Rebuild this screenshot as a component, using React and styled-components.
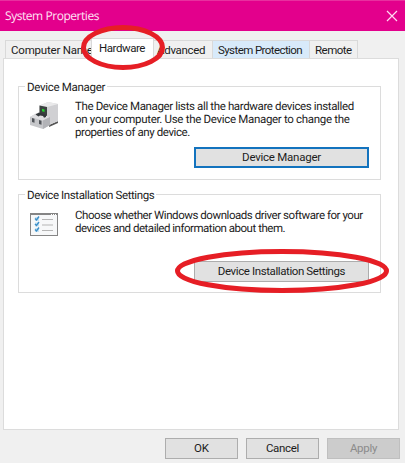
import React, { useState } from 'react';
import styled, { createGlobalStyle } from 'styled-components';

const GlobalStyle = createGlobalStyle`
body {
  margin: 0;
  background: #f0f0f0;
}
* {
  box-sizing: border-box;
}
`;

const Window = styled.div`
position: relative;
display: flex;
flex-direction: column;
width: 405px;
height: 463px;
overflow: hidden;
background: #f0f0f0;
color: #1c1c1c;
font-family: Roboto, 'Liberation Sans', sans-serif;
font-size: 11.5px;
line-height: 13px;
white-space: nowrap;
text-rendering: geometricPrecision;
`;

const TitleBar = styled.header`
display: flex;
align-items: center;
justify-content: space-between;
height: 31px;
flex: 0 0 auto;
padding: 0 7px 1px 5px;
border-top: 1px solid #e8309f;
background: #e3008c;
color: #ffe3f5;
font-family: 'Open Sans', 'Noto Sans', sans-serif;
font-size: 12px;
`;

const Title = styled.span`
letter-spacing: -0.45px;
`;

const Tabs = styled.nav`
display: flex;
align-items: flex-end;
height: 27px;
padding-left: 5px;
flex: 0 0 auto;
`;

const Tab = styled.button`
position: relative;
z-index: ${p => (p.$active ? 1 : 0)};
width: ${p => p.$width}px;
height: ${p => (p.$active ? 21 : 18)}px;
margin: 0 0 ${p => (p.$active ? -1 : 0)}px ${p => (p.$first ? 0 : -1)}px;
padding: ${p => (p.$active ? '0 0 1px' : '2px 0 0')} ${p => p.$indent}px;
text-align: left;
border: 1px solid #d9d9d9;
border-bottom: 0;
background: ${p => (p.$active ? '#fff' : p.$hot ? '#d8eafa' : '#f0f0f0')};
color: inherit;
font: inherit;
letter-spacing: ${p => p.$spacing}px;
`;

const Panel = styled.main`
width: 396px;
height: 372px;
flex: 0 0 auto;
margin-left: 3px;
padding: 27px 17px 0 14px;
border: 1px solid #dcdcdc;
background: #fff;
`;

const Group = styled.section`
display: flex;
flex-direction: column;
width: 363px;
height: ${p => p.$height}px;
margin-bottom: 14px;
border: 1px solid #dcdcdc;
`;

const Legend = styled.h2`
align-self: flex-start;
margin: -6px 0 0 6px;
padding: 0 2px;
background: #fff;
font: inherit;
letter-spacing: ${p => p.$spacing}px;
`;

const GroupBody = styled.div`
display: flex;
height: ${p => p.$height}px;
padding: ${p => p.$top}px 0 0 11px;
`;

const IconBox = styled.div`
width: 45px;
flex: 0 0 auto;
padding-top: ${p => p.$top || 0}px;

svg {
  display: block;
}
`;

const Description = styled.p`
margin: 0;
`;

const Line = styled.span`
display: block;
letter-spacing: ${p => p.$spacing}px;
`;

const Button = styled.button`
width: ${p => p.$width}px;
height: 21px;
flex: 0 0 auto;
padding: 0;
border: ${p => (p.$focused ? '2px solid #1373be' : '1px solid #adadad')};
background: #e1e1e1;
color: inherit;
font: inherit;
letter-spacing: ${p => p.$spacing || 0}px;

&:disabled {
  border-color: #bfbfbf;
  background: #ccc;
  color: #8b8b8b;
}
`;

const GroupButton = styled(Button)`
align-self: flex-end;
margin-right: 11px;
`;

const Footer = styled.footer`
display: flex;
justify-content: flex-end;
gap: 8px;
padding: 8px 5px 0 0;
`;

const Marks = styled.svg`
position: absolute;
top: 0;
left: 0;
z-index: 2;
pointer-events: none;
`;

const tabs = [
  { name: 'Computer Name', width: 87, indent: 5, spacing: -0.2 },
  { name: 'Hardware', width: 63, indent: 7, spacing: -0.45 },
  { name: 'Advanced', width: 60, indent: 3, spacing: -0.3 },
  { name: 'System Protection', width: 98, indent: 5, spacing: -0.58, hot: true },
  { name: 'Remote', width: 49, indent: 5, spacing: -0.5 },
];

function CloseIcon() {
  return (
    <svg width="12" height="12" viewBox="0 0 12 12" stroke="#ffd9f1" strokeWidth="1.2">
      <path d="M1 1l10 10M11 1L1 11" />
    </svg>
  );
}

function DeviceIcon() {
  return (
    <svg width="30" height="30" viewBox="0 0 30 30">
      <path d="M19 24l9-4v2l-9 4z" fill="#555" />
      <path d="M9.500 4.500L18 1l10 2v17l-9 4-9.500-3z" fill="#d6d6d8" />
      <path d="M17 6l11-3v17l-11 4z" fill="#d0d0d3" />
      <path d="M9.500 4.500L18 1l10 2-11 3z" fill="#e9e9ea" />
      <path d="M9.500 4.500L17 6v10l-7.500-2z" fill="#3c4140" />
      <path d="M12 7.800l2.500.6v2.500l-2.500-.6z" fill="#20d52b" />
      <path d="M0 16l7-4 13 4v8l-7 4-13-4z" fill="#c6c7ca" />
      <path d="M0 16l7-4 13 4-7 3.500z" fill="#dedee1" />
      <path d="M13 19.500l7-3.500v8l-7 4z" fill="#b2b3b7" />
      <path d="M5.500 13.500L9 11.500l7 2v2.500l-2 .8-1-1.800-3-.6-1.500 1.200z" fill="#34383b" />
      <path d="M2 17l2.500.8v4L2 21zM9 19l2.500.8v4L9 23z" fill="#505459" />
    </svg>
  );
}

function ChecklistIcon() {
  return (
    <svg width="28" height="23" viewBox="0 0 28 23">
      <rect x=".5" y=".5" width="27" height="22" fill="#f7f8f9" stroke="#858585" />
      <path d="M0 1h28" stroke="#858585" strokeWidth="2" />
      <path d="M21 1.500h1M23 1.500h1M25 1.500h1" stroke="#fff" />
      <path d="M12 6.500h11M12 12h11M12 17.500h11" stroke="#b5b5b5" />
      <path d="M5 4h4v4H5zM5 9.500h4v4H5zM5 15h4v4H5z" fill="#c7e4f5" />
      <path d="M5 5.500l1.500 1.500L9 3.500M5 11l1.500 1.500L9 9M5 16.500l1.500 1.500L9 14.500" fill="none" stroke="#3d8fc8" strokeWidth="1.400" />
    </svg>
  );
}

function App() {
  const [active, setActive] = useState('Hardware');

  return (
    <>
      <GlobalStyle />
      <Window>
        <TitleBar>
          <Title>System Properties</Title>
          <CloseIcon />
        </TitleBar>

        <Tabs>
          {tabs.map((tab, i) => (
            <Tab
              key={tab.name}
              $first={i === 0}
              $active={tab.name === active}
              $hot={tab.hot}
              $width={tab.width}
              $indent={tab.indent}
              $spacing={tab.spacing}
              onClick={() => setActive(tab.name)}
            >
              {tab.name}
            </Tab>
          ))}
        </Tabs>

        <Panel>
          <Group $height={94}>
            <Legend $spacing={-0.3}>Device Manager</Legend>
            <GroupBody $height={53} $top={6}>
              <IconBox $top={1}><DeviceIcon /></IconBox>
              <Description>
                <Line $spacing={-0.37}>The Device Manager lists all the hardware devices installed</Line>
                <Line $spacing={-0.31}>on your computer. Use the Device Manager to change the</Line>
                <Line $spacing={-0.42}>properties of any device.</Line>
              </Description>
            </GroupBody>
            <GroupButton $width={175} $spacing={-0.25} $focused>Device Manager</GroupButton>
          </Group>

          <Group $height={99}>
            <Legend $spacing={-0.4}>Device Installation Settings</Legend>
            <GroupBody $height={59} $top={7}>
              <IconBox $top={4}><ChecklistIcon /></IconBox>
              <Description>
                <Line $spacing={-0.45}>Choose whether Windows downloads driver software for your</Line>
                <Line $spacing={-0.48}>devices and detailed information about them.</Line>
              </Description>
            </GroupBody>
            <GroupButton $width={175} $spacing={-0.4}>Device Installation Settings</GroupButton>
          </Group>
        </Panel>

        <Footer>
          <Button $width={73}>OK</Button>
          <Button $width={73} $spacing={-0.3}>Cancel</Button>
          <Button $width={73} $spacing={-0.3} disabled>Apply</Button>
        </Footer>

        <Marks width="405" height="463" fill="none" stroke="#e61e25" strokeWidth="5">
          <ellipse cx="123" cy="47.500" rx="39.500" ry="20" />
          <ellipse cx="282" cy="271" rx="104.500" ry="19.500" />
        </Marks>
      </Window>
    </>
  );
}

export default App;
